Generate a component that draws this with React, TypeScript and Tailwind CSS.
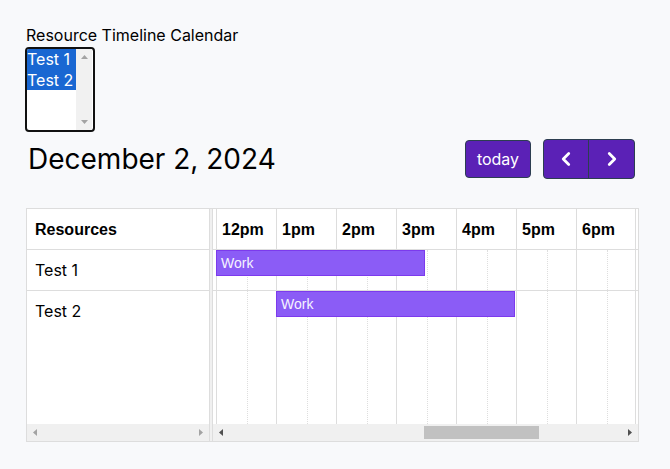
import { ChevronLeft, ChevronRight } from "lucide-react";

// ── 데이터 ──────────────────────────────────────────────────────
const HOURS = ["12pm", "1pm", "2pm", "3pm", "4pm", "5pm", "6pm"];

const RESOURCES = [
  { id: "t1", title: "Test 1", event: { title: "Work", start: 0, end: 3.5 } },
  { id: "t2", title: "Test 2", event: { title: "Work", start: 1, end: 5 } },
];

const SLOT = 60;
const INTER = { fontFamily: "Inter, 'Liberation Sans', sans-serif" };
const ARIAL = { fontFamily: "'Liberation Sans', Arial, sans-serif" };

export default function App() {
  return (
    <div className="min-h-[469px] bg-[#f8f9fb] pl-[26px] pt-[23px] text-black" style={INTER}>
      <div className="h-[24px] text-[16px] leading-[24px]">Resource Timeline Calendar</div>

      {/* 가짜 select */}
      <div className="-ml-px flex h-[85px] w-[70px] overflow-hidden rounded-[4px] border-2 border-[#111] bg-white">
        <div className="w-[49px]">
          {RESOURCES.map((r) => (
            <div key={r.id} className="h-[20.5px] bg-[#1967d2] text-[16px] leading-[20px] text-white">
              {r.title}
            </div>
          ))}
        </div>
        <div className="flex w-[16px] flex-col items-center justify-between bg-[#f1f1f1] py-[6px]">
          <Tri dir="up" color="#a3a3a3" />
          <Tri dir="down" color="#a3a3a3" />
        </div>
      </div>

      {/* 툴바 */}
      <div className="mt-[7px] flex h-[40px] w-[609px] items-center justify-between">
        <h2 className="pl-[2px] text-[28px] leading-[34px]">December 2, 2024</h2>
        <div className="flex items-center">
          <button
            type="button"
            className="mr-[12px] h-[38px] w-[66px] rounded-[4px] border border-[#2c3e50] bg-[#5b21b6] text-[16px] text-white"
          >
            today
          </button>
          <div className="flex h-[40px] overflow-hidden rounded-[4px] border border-[#2c3e50] bg-[#5b21b6]">
            <button type="button" className="flex w-[45px] items-center justify-center border-r border-[#2c3e50] text-white">
              <ChevronLeft size={22} strokeWidth={3} />
            </button>
            <button type="button" className="flex w-[45px] items-center justify-center text-white">
              <ChevronRight size={22} strokeWidth={3} />
            </button>
          </div>
        </div>
      </div>

      {/* 캘린더 */}
      <div className="mt-[29px] flex h-[234px] w-[613px] border border-[#ddd] bg-white">
        {/* 리소스 영역 */}
        <div className="flex w-[183px] flex-col border-r border-[#ddd]">
          <div className="flex h-[41px] items-center border-b border-[#ddd] pl-[8px] pt-[2px] text-[16px] font-bold" style={ARIAL}>
            Resources
          </div>
          {RESOURCES.map((r, i) => (
            <div
              key={r.id}
              className={`flex h-[41px] items-center border-b pl-[8px] text-[16px] ${i < RESOURCES.length - 1 ? "border-[#ddd]" : "border-transparent"}`}
            >
              {r.title}
            </div>
          ))}
          <div className="flex-1" />
          <div className="flex h-[17px] items-center justify-between bg-[#f0f0f0] px-[6px]">
            <Tri dir="left" color="#a3a3a3" />
            <Tri dir="right" color="#a3a3a3" />
          </div>
        </div>

        {/* 리사이저 */}
        <div className="w-[3px] border-r border-[#ddd] bg-[#f0f0f0]" />

        {/* 타임라인 */}
        <div className="flex flex-1 flex-col">
          <div className="relative flex-1">
            {/* 세로 격자 */}
            <div className="absolute inset-0 flex pl-[3px]">
              {HOURS.map((h, i) => (
                <div
                  key={h}
                  className={`relative w-[60px] border-l border-[#ddd] ${i === HOURS.length - 1 ? "border-r" : ""}`}
                >
                  <div className="absolute bottom-0 left-[30px] top-[41px] border-l border-dotted border-[#dedede]" />
                </div>
              ))}
            </div>

            <div className="relative">
              <div className="flex h-[41px] border-b border-[#ddd] pl-[3px]">
                {HOURS.map((h) => (
                  <div key={h} className="flex w-[60px] items-center pl-[6px] pt-[2px] text-[16px] font-bold" style={ARIAL}>
                    {h}
                  </div>
                ))}
              </div>
              {RESOURCES.map((r, i) => (
                <div
                  key={r.id}
                  className={`relative h-[41px] ${i < RESOURCES.length - 1 ? "border-b border-[#ddd]" : ""}`}
                >
                  <div
                    className="absolute top-0 flex h-[26px] items-center border border-[#7c3aed] bg-[#8b5cf6] pl-[4px] text-[14px] text-[#f5f3ff]"
                    style={{
                      ...ARIAL,
                      left: 3 + r.event.start * SLOT,
                      width: (r.event.end - r.event.start) * SLOT - 1,
                    }}
                  >
                    {r.event.title}
                  </div>
                </div>
              ))}
            </div>
          </div>
          <div className="flex h-[17px] items-center bg-[#f0f0f0] pl-[6px] pr-[6px]">
            <Tri dir="left" color="#505050" />
            <div className="ml-[201px] h-[13px] w-[115px] bg-[#c1c1c1]" />
            <div className="flex-1" />
            <Tri dir="right" color="#505050" />
          </div>
        </div>
      </div>
    </div>
  );
}

// ── 스크롤바 화살표 ─────────────────────────────────────────────
function Tri({ dir, color }: { dir: "up" | "down" | "left" | "right"; color: string }) {
  const pts = {
    up: "0,4 3.5,0 7,4",
    down: "0,0 7,0 3.5,4",
    left: "4,0 4,7 0,3.5",
    right: "0,0 4,3.5 0,7",
  }[dir];
  const vertical = dir === "up" || dir === "down";
  return (
    <svg width={vertical ? 7 : 4} height={vertical ? 4 : 7} viewBox={vertical ? "0 0 7 4" : "0 0 4 7"}>
      <polygon points={pts} fill={color} />
    </svg>
  );
}
